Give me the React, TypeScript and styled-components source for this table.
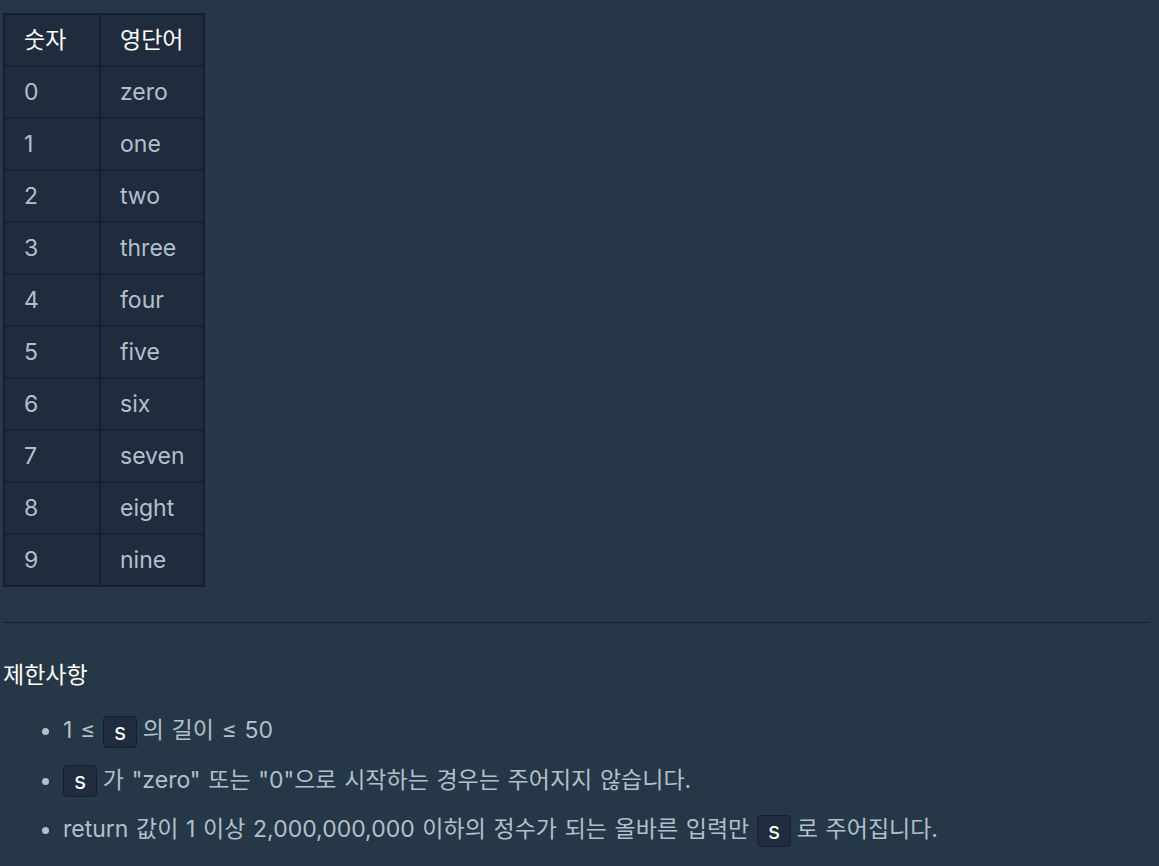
import React from 'react';
import styled, { createGlobalStyle } from 'styled-components';

const Global = createGlobalStyle`
    html, body {
        margin: 0;
        padding: 0;
        background: #263747;
    }
    body {
        font-family: Inter, "Noto Sans CJK KR", sans-serif;
        font-size: 23px;
        color: #b2c0cc;
    }
`;

const Styles = {
    Page: styled.div`
        min-height: 866px;
        padding: 13px 9px 0 3px;
        box-sizing: border-box;
    `,

    Table: styled.table`
        border-collapse: collapse;
        background: #202b3d;
        border: 2px solid #172030;
    `,

    Head: styled.th<{ $wide?: boolean }>`
        text-align: left;
        font-weight: 400;
        color: #ffffff;
        border: 2px solid #172030;
        padding: 12px 18px 12px 19px;
        line-height: 26px;
        width: ${p => (p.$wide ? 'auto' : '57px')};
    `,

    Cell: styled.td`
        border: 2px solid #172030;
        padding: 12px 18px 12px 19px;
        line-height: 26px;
    `,

    Rule: styled.hr`
        border: none;
        border-top: 1px solid #172030;
        margin: 35px 0 0;
    `,

    Title: styled.h5`
        margin: 36px 0 0;
        font-size: 23px;
        font-weight: 400;
        color: #ffffff;
        line-height: 32px;
    `,

    List: styled.ul`
        margin: 23px 0 0;
        padding-left: 60px;
        word-spacing: 1.2px;
    `,

    Item: styled.li`
        line-height: 32px;
        margin-bottom: 16px;

        &::marker {
            color: #b2c0cc;
        }
    `,

    Code: styled.code`
        display: inline-block;
        font-family: Inter, "Noto Sans CJK KR", sans-serif;
        font-size: 23px;
        line-height: 24px;
        color: #ffffff;
        background: #202b3d;
        border: 1px solid #172030;
        border-radius: 4px;
        padding: 3px 10px;
        margin: 0 -2px 0 0;
        vertical-align: middle;
    `,
};

const words = ['zero', 'one', 'two', 'three', 'four', 'five', 'six', 'seven', 'eight', 'nine'];

export default function App() {
    return (
        <Styles.Page>
            <Global />
            <Styles.Table>
                <thead>
                    <tr>
                        <Styles.Head>숫자</Styles.Head>
                        <Styles.Head $wide>영단어</Styles.Head>
                    </tr>
                </thead>
                <tbody>
                    {words.map((w, i) => (
                        <tr key={w}>
                            <Styles.Cell>{i}</Styles.Cell>
                            <Styles.Cell>{w}</Styles.Cell>
                        </tr>
                    ))}
                </tbody>
            </Styles.Table>
            <Styles.Rule />
            <Styles.Title>제한사항</Styles.Title>
            <Styles.List>
                <Styles.Item>
                    1 ≤ <Styles.Code>s</Styles.Code> 의 길이 ≤ 50
                </Styles.Item>
                <Styles.Item>
                    <Styles.Code>s</Styles.Code> 가 "zero" 또는 "0"으로 시작하는 경우는 주어지지 않습니다.
                </Styles.Item>
                <Styles.Item>
                    return 값이 1 이상 2,000,000,000 이하의 정수가 되는 올바른 입력만 <Styles.Code>s</Styles.Code> 로 주어집니다.
                </Styles.Item>
            </Styles.List>
        </Styles.Page>
    );
}
